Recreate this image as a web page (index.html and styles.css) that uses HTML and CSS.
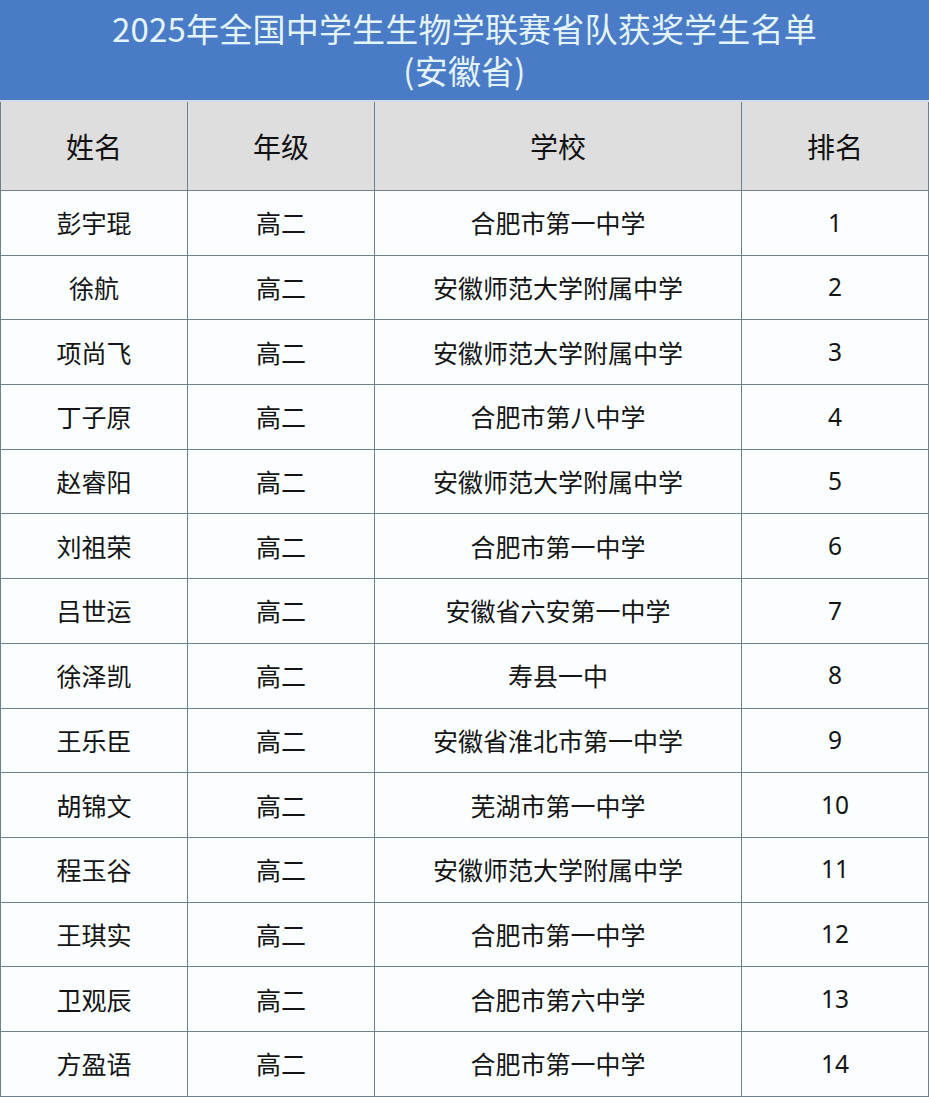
FILE: index.html
```html
<!DOCTYPE html>
<html lang="zh-CN">
<head>
<meta charset="utf-8">
<title>2025年全国中学生生物学联赛省队获奖学生名单（安徽省）</title>
<link rel="stylesheet" href="styles.css">
</head>
<body>
<div class="sheet">
  <div class="title">
    <div class="title-line">2025年全国中学生生物学联赛省队获奖学生名单</div>
    <div class="title-line">(安徽省)</div>
  </div>
  <table class="list">
    <colgroup>
      <col class="c-name"><col class="c-grade"><col class="c-school"><col class="c-rank">
    </colgroup>
    <thead>
      <tr><th>姓名</th><th>年级</th><th>学校</th><th>排名</th></tr>
    </thead>
    <tbody>
      <tr><td>彭宇琨</td><td>高二</td><td>合肥市第一中学</td><td class="num">1</td></tr>
      <tr><td>徐航</td><td>高二</td><td>安徽师范大学附属中学</td><td class="num">2</td></tr>
      <tr><td>项尚飞</td><td>高二</td><td>安徽师范大学附属中学</td><td class="num">3</td></tr>
      <tr><td>丁子原</td><td>高二</td><td>合肥市第八中学</td><td class="num">4</td></tr>
      <tr><td>赵睿阳</td><td>高二</td><td>安徽师范大学附属中学</td><td class="num">5</td></tr>
      <tr><td>刘祖荣</td><td>高二</td><td>合肥市第一中学</td><td class="num">6</td></tr>
      <tr><td>吕世运</td><td>高二</td><td>安徽省六安第一中学</td><td class="num">7</td></tr>
      <tr><td>徐泽凯</td><td>高二</td><td>寿县一中</td><td class="num">8</td></tr>
      <tr><td>王乐臣</td><td>高二</td><td>安徽省淮北市第一中学</td><td class="num">9</td></tr>
      <tr><td>胡锦文</td><td>高二</td><td>芜湖市第一中学</td><td class="num">10</td></tr>
      <tr><td>程玉谷</td><td>高二</td><td>安徽师范大学附属中学</td><td class="num">11</td></tr>
      <tr><td>王琪实</td><td>高二</td><td>合肥市第一中学</td><td class="num">12</td></tr>
      <tr><td>卫观辰</td><td>高二</td><td>合肥市第六中学</td><td class="num">13</td></tr>
      <tr><td>方盈语</td><td>高二</td><td>合肥市第一中学</td><td class="num">14</td></tr>
    </tbody>
  </table>
</div>
</body>
</html>
```
FILE: styles.css
```css
html, body {
  margin: 0;
  padding: 0;
  background: #ffffff;
}

body {
  font-family: "Noto Sans CJK SC", "Noto Sans", sans-serif;
  color: #141414;
}

.sheet {
  width: 929px;
}

.title {
  height: 100px;
  background: #4a7bc6;
  color: #e4f4fb;
  font-size: 33px;
  text-align: center;
  display: flex;
  flex-direction: column;
  justify-content: center;
  padding-bottom: 2px;
  box-sizing: border-box;
}

.title-line {
  line-height: 42px;
  letter-spacing: 0.2px;
}

.list {
  width: 928px;
  border-collapse: collapse;
  table-layout: fixed;
  background: #fbfeff;
}

.c-name { width: 187px; }
.c-grade { width: 187px; }
.c-school { width: 367px; }
.c-rank { width: 187px; }

.list th,
.list td {
  border: 1.5px solid #6f7f8c;
  text-align: center;
  vertical-align: middle;
  padding: 0;
}

.list thead th {
  height: 88px;
  background: #dedede;
  font-size: 28px;
  font-weight: 400;
  color: #111;
  border-top: 2px solid #d4dcea;
}

.list tbody td {
  height: 63.7px;
  font-size: 25px;
  line-height: 1;
}

.list td.num {
  font-family: "Noto Sans", "Open Sans", sans-serif;
  font-size: 24.5px;
}
```
